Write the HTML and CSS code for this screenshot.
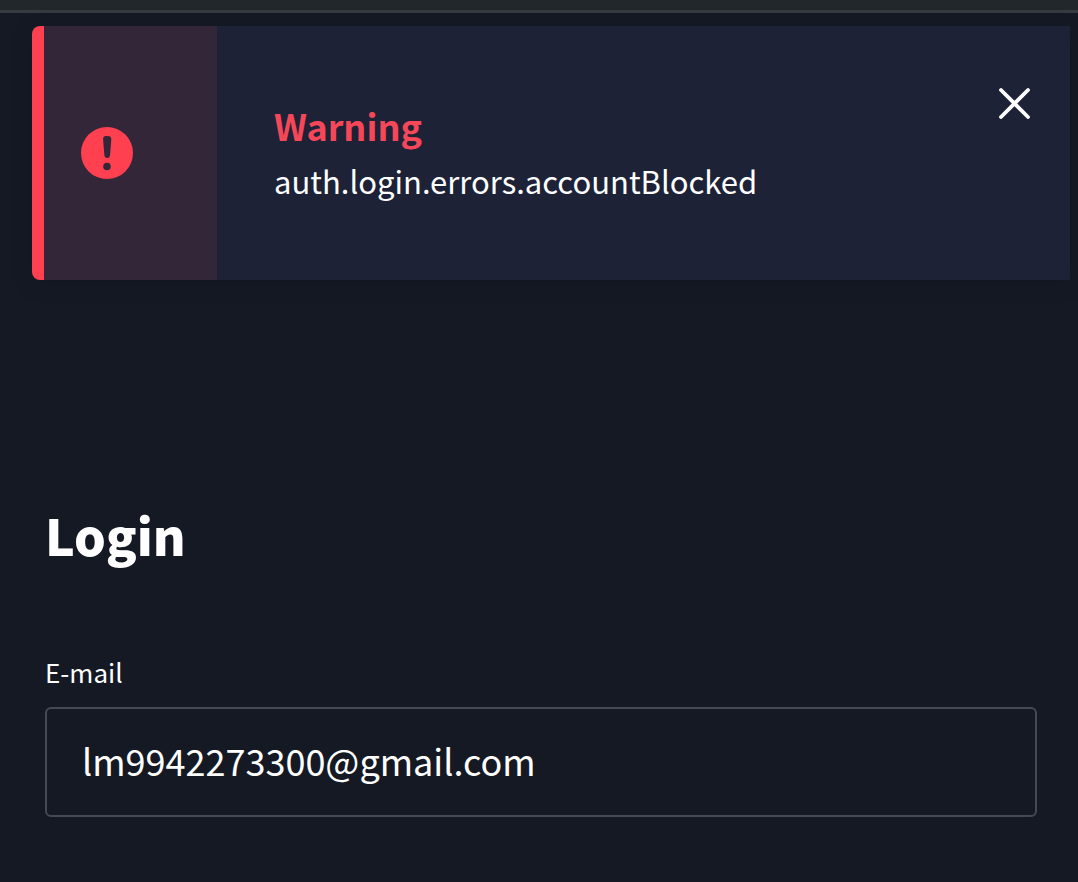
FILE: index.html
```html
<!DOCTYPE html>
<html lang="en">
<head>
  <meta charset="UTF-8">
  <meta name="viewport" content="width=device-width, initial-scale=1.0">
  <title>Login</title>
  <link rel="stylesheet" href="styles.css">
</head>
<body>
  <header class="topbar"></header>

  <div class="alert" role="alert">
    <div class="alert-icon">
      <svg width="52" height="52" viewBox="0 0 52 52" aria-hidden="true">
        <circle cx="26" cy="26" r="26" fill="#ff4050"/>
        <path d="M25 9h2q3.500 0 3.300 3.500l-1.300 16q-.2 2.500-2.800 2.500t-2.800-2.500l-1.300-16Q21.800 9 25 9z" fill="#332639"/>
        <circle cx="26" cy="39.500" r="3.800" fill="#332639"/>
      </svg>
    </div>
    <div class="alert-body">
      <strong class="alert-title">Warning</strong>
      <p class="alert-text">auth.login.errors.accountBlocked</p>
    </div>
    <button class="alert-close" type="button" aria-label="Close">
      <svg width="32" height="32" viewBox="0 0 32 32" aria-hidden="true">
        <path d="M2 3l27 27M29 3L2 30" stroke="#fff" stroke-width="3.800" stroke-linecap="round"/>
      </svg>
    </button>
  </div>

  <main class="login">
    <h1>Login</h1>
    <form>
      <label for="email">E-mail</label>
      <input type="email" id="email" name="email" value="lm9942273300@gmail.com">
    </form>
  </main>
</body>
</html>
```

FILE: styles.css
```css
* {
  box-sizing: border-box;
}
body {
  margin: 0;
  background-color: #151924;
  color: #fff;
  font-family: "Noto Sans CJK SC", "Noto Sans", sans-serif;
}
.topbar {
  height: 13px;
  background-color: #22272b;
  border-bottom: 3px solid #373a41;
}
.alert {
  display: flex;
  margin: 13px 8px 0 32px;
  min-height: 254px;
  background-color: #1d2237;
  border-left: 12px solid #ff4050;
  border-radius: 8px 0 0 8px;
  box-shadow: 0 4px 24px rgba(0, 0, 0, 0.1);
}
.alert-icon {
  display: flex;
  align-items: center;
  width: 173px;
  padding-left: 37px;
  background-color: #332639;
}
.alert-body {
  flex: 1;
  padding: 71px 0 0 57px;
}
.alert-title {
  display: block;
  color: #f64759;
  font-size: 36px;
  line-height: 56px;
}
.alert-text {
  margin: 0;
  font-size: 31px;
  line-height: 56px;
}
.alert-close {
  align-self: flex-start;
  margin: 61px 39px 0 0;
  padding: 0;
  border: 0;
  background: none;
  cursor: pointer;
}
.alert-close svg {
  display: block;
}
.login {
  padding: 216px 41px 64px 45px;
}
.login h1 {
  margin: 0 0 82px;
  font-size: 50px;
  font-weight: 900;
  line-height: 76px;
}
.login label {
  display: block;
  margin-bottom: 17px;
  font-size: 26px;
  line-height: 36px;
}
.login input {
  display: block;
  width: 100%;
  height: 110px;
  padding: 0 35px 4px;
  border: 2px solid #454954;
  border-radius: 6px;
  background-color: #151924;
  color: #fff;
  font-family: inherit;
  font-size: 36px;
}
```
